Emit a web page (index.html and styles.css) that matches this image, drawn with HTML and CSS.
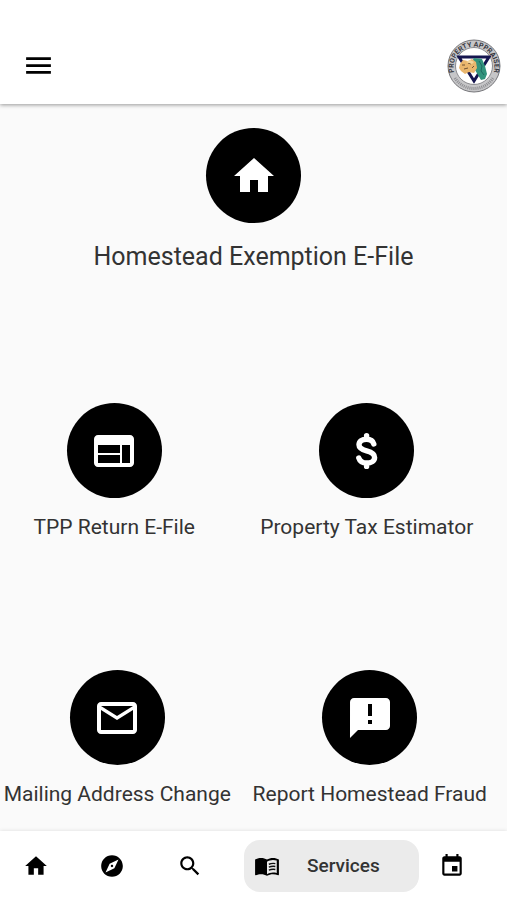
FILE: index.html
```html
<!DOCTYPE html>
<html lang="en">
<head>
<meta charset="utf-8">
<meta name="viewport" content="width=device-width, initial-scale=1">
<title>Services</title>
<link rel="stylesheet" href="styles.css">
</head>
<body>
<header class="topbar">
  <button class="menu" type="button" aria-label="Menu">
    <svg viewBox="0 0 24 24"><path d="M3 18h18v-2H3v2zm0-5h18v-2H3v2zm0-7v2h18V6H3z"/></svg>
  </button>
  <svg class="seal" viewBox="0 0 54 54" role="img" aria-label="Property Appraiser">
    <defs>
      <path id="arc" d="M8.500 37A20.500 20.500 0 1 1 45.500 37"/>
    </defs>
    <circle cx="27" cy="27" r="26" fill="#c6c6c8" stroke="#77777b"/>
    <path d="M8 39A22.500 22.500 0 0 0 46 39" fill="none" stroke="#66666b" stroke-width="3" stroke-dasharray="1 1" opacity=".6"/>
    <circle cx="27" cy="27" r="18.500" fill="#fff" stroke="#8c8c90"/>
    <text class="seal-text"><textPath href="#arc" startOffset="50%" text-anchor="middle">PROPERTY APPRAISER</textPath></text>
    <path d="M12 18h30L27 42z" fill="#fff" stroke="#15154f" stroke-width="3"/>
    <path d="M27 19l8 1 3 7 2 8-2 5-4 1-3-5-3-5-5-2 1-5z" fill="#32947d"/>
    <path d="M13 25l3-4 5 1 4-2 4 3 1 6-3 5-5-1-4 2-4-3-2-3z" fill="#e9b66d"/>
    <path d="M15 26h3m3-2l3 1m-7 5l4-1m4 0l2-2" fill="none" stroke="#6f5134" stroke-width="1"/>
    <path d="M19 23l4-2 4 2-2 2z" fill="#f4d69c"/>
    <path d="M32 22l3 5-1 5 3 4" fill="none" stroke="#1e6960" stroke-width="1"/>
  </svg>
</header>

<main class="services">
  <div class="row row-featured">
    <a class="tile" href="#homestead">
      <span class="disc"><svg viewBox="0 0 24 24"><path d="M10 20v-6h4v6h5v-8h3L12 3 2 12h3v8z"/></svg></span>
      <span class="label">Homestead Exemption E-File</span>
    </a>
  </div>
  <div class="row row-pair">
    <a class="tile" href="#tpp">
      <span class="disc"><svg viewBox="0 0 24 24"><path d="M20 4H4c-1.100 0-1.990.9-1.990 2L2 18c0 1.100.9 2 2 2h16c1.100 0 2-.9 2-2V6c0-1.100-.9-2-2-2zm-5 14H4v-4h11v4zm0-5H4V9h11v4zm5 5h-4V9h4v9z"/></svg></span>
      <span class="label">TPP Return E-File</span>
    </a>
    <a class="tile" href="#estimator">
      <span class="disc"><svg viewBox="0 0 24 24"><path d="M15.400 8.500C15 7 13.700 6.100 11.800 6.100c-2.300 0-3.800 1.100-3.800 2.800 0 1.800 1.500 2.400 3.800 3s4 1.500 4 3.300c0 1.700-1.600 2.800-4 2.800-2 0-3.400-.9-3.900-2.500M11.800 4.300V6m0 12.200v1.500" fill="none" stroke="#fff" stroke-width="2.700" stroke-linecap="round"/></svg></span>
      <span class="label">Property Tax Estimator</span>
    </a>
  </div>
  <div class="row row-pair row-wide">
    <a class="tile" href="#mailing">
      <span class="disc"><svg viewBox="0 0 24 24"><path d="M22 6c0-1.100-.9-2-2-2H4c-1.100 0-2 .9-2 2v12c0 1.100.9 2 2 2h16c1.100 0 2-.9 2-2V6zm-2 0l-8 5-8-5h16zm0 12H4V8l8 5 8-5v10z"/></svg></span>
      <span class="label">Mailing Address Change</span>
    </a>
    <a class="tile" href="#fraud">
      <span class="disc"><svg viewBox="0 0 24 24"><path d="M20 2H4c-1.100 0-1.990.9-1.990 2L2 22l4-4h14c1.100 0 2-.9 2-2V4c0-1.100-.9-2-2-2zm-7 9h-2V5h2v6zm0 4h-2v-2h2v2z"/></svg></span>
      <span class="label">Report Homestead Fraud</span>
    </a>
  </div>
</main>

<nav class="tabs">
  <button class="tab" type="button" aria-label="Home">
    <svg viewBox="0 0 24 24"><path d="M10 20v-6h4v6h5v-8h3L12 3 2 12h3v8z"/></svg>
  </button>
  <button class="tab" type="button" aria-label="Explore">
    <svg viewBox="0 0 24 24"><path d="M12 10.900c-.61 0-1.100.49-1.100 1.100s.49 1.100 1.100 1.100 1.100-.49 1.100-1.100-.49-1.100-1.100-1.100zM12 2C6.480 2 2 6.480 2 12s4.480 10 10 10 10-4.480 10-10S17.520 2 12 2zm2.190 12.190L6 18l3.810-8.190L18 6l-3.810 8.190z"/></svg>
  </button>
  <button class="tab" type="button" aria-label="Search">
    <svg viewBox="0 0 24 24"><path d="M15.500 14h-.79l-.28-.27C15.410 12.590 16 11.110 16 9.500 16 5.910 13.090 3 9.500 3S3 5.910 3 9.500 5.910 16 9.500 16c1.610 0 3.090-.59 4.230-1.570l.27.28v.79l5 4.990L20.490 19l-4.990-5zm-6 0C7.010 14 5 11.990 5 9.500S7.010 5 9.500 5 14 7.010 14 9.500 11.990 14 9.500 14z"/></svg>
  </button>
  <button class="tab tab-active" type="button" aria-current="page">
    <svg viewBox="0 0 24 24"><path fill-rule="evenodd" d="M12 6C10.500 5 8.600 4.500 6.500 4.500S2.400 5 1 6v14.100c0 .3.300.5.600.4 1.400-.6 3.200-1 4.900-1 2 0 4 .5 5.500 1.500 1.400-.9 3.800-1.500 5.500-1.500 1.600 0 3.300.3 4.800 1 .4.200.7-.1.700-.4V6c-1.500-1-3.500-1.500-5.500-1.500S13.400 5 12 6zm9 12.500c-1.100-.4-2.300-.5-3.500-.5-1.700 0-4.200.7-5.500 1.500V8c1.300-.8 3.800-1.500 5.500-1.500 1.200 0 2.400.2 3.500.5z"/><path d="M13.700 10.400c2-.8 4-1 6-.6M13.700 13.100c2-.8 4-1 6-.6M13.700 15.800c2-.8 4-1 6-.6" fill="none" stroke="#111" stroke-width="1.300"/></svg>
    <span class="tab-name">Services</span>
  </button>
  <button class="tab" type="button" aria-label="Events">
    <svg viewBox="0 0 24 24"><path d="M17 12h-5v5h5v-5zM16 1v2H8V1H6v2H5c-1.110 0-1.990.9-1.990 2L3 19c0 1.100.89 2 2 2h14c1.100 0 2-.9 2-2V5c0-1.100-.9-2-2-2h-1V1h-2zm3 18H5V8h14v11z"/></svg>
  </button>
</nav>
</body>
</html>
```
FILE: styles.css
```css
* {
  box-sizing: border-box;
}

body {
  margin: 0;
  min-height: 100vh;
  display: flex;
  flex-direction: column;
  background: #fafafa;
  color: #333;
  font-family: Roboto, "Liberation Sans", sans-serif;
}

svg {
  display: block;
  flex: none;
}

button {
  border: 0;
  padding: 0;
  background: none;
  color: inherit;
  font: inherit;
}

.topbar {
  display: flex;
  align-items: center;
  justify-content: space-between;
  height: 104px;
  padding: 27px 6px 0 22px;
  background: #fff;
  box-shadow: 0 1px 4px rgba(0, 0, 0, 0.4);
}

.menu svg {
  width: 33px;
  height: 33px;
}

.seal {
  width: 54px;
  height: 54px;
}

.seal-text {
  font-size: 7px;
  font-weight: 700;
  fill: #38383f;
}

.services {
  flex: 1;
  padding-top: 24px;
}

.row {
  display: grid;
  height: 267px;
}

.row-featured {
  height: 275px;
}

.row-pair {
  grid-template-columns: repeat(2, minmax(0, 1fr));
  column-gap: 24px;
  padding-right: 26px;
}

.row-wide {
  height: 160px;
  column-gap: 18px;
  padding-right: 20px;
}

.tile {
  display: flex;
  flex-direction: column;
  align-items: center;
  gap: 16px;
  color: inherit;
  text-decoration: none;
}

.disc {
  display: grid;
  place-items: center;
  flex: none;
  width: 95px;
  height: 95px;
  border-radius: 50%;
  background: #000;
}

.disc svg {
  width: 48px;
  height: 48px;
  fill: #fff;
}

.label {
  font-size: 21px;
  line-height: 26px;
  white-space: nowrap;
}

.row-featured .label {
  font-size: 25px;
  line-height: 36px;
}

.tabs {
  display: grid;
  grid-template-columns: 71fr 82fr 74fr 192fr 66fr 22fr;
  align-items: center;
  height: 69px;
  background: #fff;
  box-shadow: 0 0 4px rgba(0, 0, 0, 0.12);
}

.tab {
  display: flex;
  align-items: center;
  justify-content: center;
  height: 52px;
}

.tab svg {
  width: 26px;
  height: 26px;
}

.tab-active {
  justify-content: flex-start;
  gap: 27px;
  margin-left: 17px;
  padding-left: 10px;
  border-radius: 16px;
  background: #ebebeb;
}

.tab-name {
  font-size: 19px;
  font-weight: 500;
}
```
